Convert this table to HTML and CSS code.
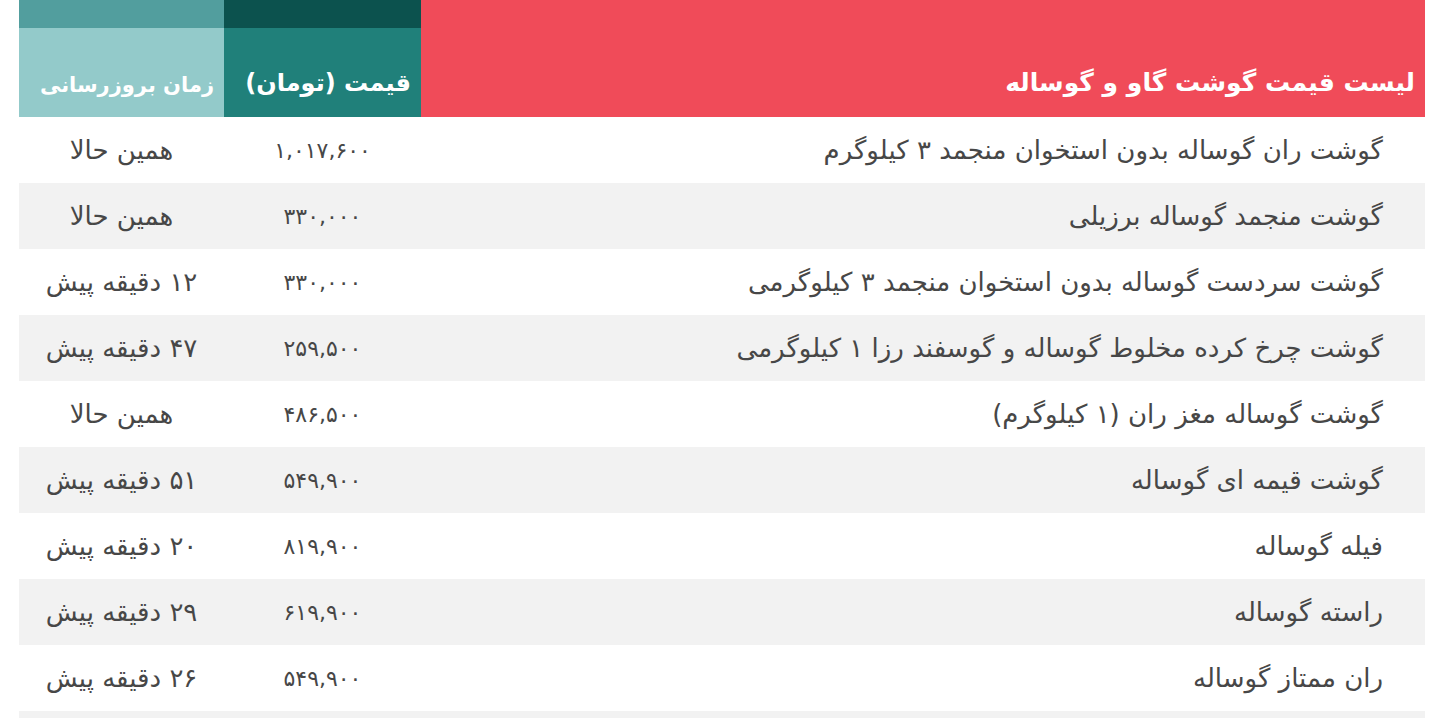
FILE: index.html
```html
<!DOCTYPE html>
<html lang="fa" dir="rtl">
<head>
<meta charset="utf-8">
<title>لیست قیمت گوشت گاو و گوساله</title>
<link rel="stylesheet" href="styles.css">
</head>
<body>
<table class="price-table">
  <thead>
    <tr>
      <th class="h-title">لیست قیمت گوشت گاو و گوساله</th>
      <th class="h-price">قیمت (تومان)</th>
      <th class="h-time">زمان بروزرسانی</th>
    </tr>
  </thead>
  <tbody>
    <tr><td class="c-name">گوشت ران گوساله بدون استخوان منجمد ۳ کیلوگرم</td><td class="c-price">۱,۰۱۷,۶۰۰</td><td class="c-time">همین حالا</td></tr>
    <tr><td class="c-name">گوشت منجمد گوساله برزیلی</td><td class="c-price">۳۳۰,۰۰۰</td><td class="c-time">همین حالا</td></tr>
    <tr><td class="c-name">گوشت سردست گوساله بدون استخوان منجمد ۳ کیلوگرمی</td><td class="c-price">۳۳۰,۰۰۰</td><td class="c-time">۱۲ دقیقه پیش</td></tr>
    <tr><td class="c-name">گوشت چرخ کرده مخلوط گوساله و گوسفند رزا ۱ کیلوگرمی</td><td class="c-price">۲۵۹,۵۰۰</td><td class="c-time">۴۷ دقیقه پیش</td></tr>
    <tr><td class="c-name">گوشت گوساله مغز ران (۱ کیلوگرم)</td><td class="c-price">۴۸۶,۵۰۰</td><td class="c-time">همین حالا</td></tr>
    <tr><td class="c-name">گوشت قیمه ای گوساله</td><td class="c-price">۵۴۹,۹۰۰</td><td class="c-time">۵۱ دقیقه پیش</td></tr>
    <tr><td class="c-name">فیله گوساله</td><td class="c-price">۸۱۹,۹۰۰</td><td class="c-time">۲۰ دقیقه پیش</td></tr>
    <tr><td class="c-name">راسته گوساله</td><td class="c-price">۶۱۹,۹۰۰</td><td class="c-time">۲۹ دقیقه پیش</td></tr>
    <tr><td class="c-name">ران ممتاز گوساله</td><td class="c-price">۵۴۹,۹۰۰</td><td class="c-time">۲۶ دقیقه پیش</td></tr>
    <tr class="row-empty"><td class="c-name"></td><td class="c-price"></td><td class="c-time"></td></tr>
  </tbody>
</table>
</body>
</html>
```
FILE: styles.css
```css
html, body {
  margin: 0;
  padding: 0;
  background: #ffffff;
}
body {
  padding: 0 16px 0 19px;
  font-family: "DejaVu Sans", "Noto Sans", sans-serif;
  color: #474747;
}
.price-table {
  width: 1406px;
  border-collapse: separate;
  border-spacing: 0;
  table-layout: fixed;
}
.price-table th {
  height: 97px;
  padding: 0 10px 20px 10px;
  vertical-align: bottom;
  text-align: right;
  color: #ffffff;
  font-weight: bold;
  white-space: nowrap;
  overflow: hidden;
}
.h-title {
  width: 984px;
  font-size: 25px;
  background: #f04b59;
}
.h-price {
  width: 177px;
  font-size: 24px;
  background: linear-gradient(to bottom, #0c524e 0, #0c524e 28px, #20807a 28px);
}
.h-time {
  width: 185px;
  font-size: 21px;
  background: linear-gradient(to bottom, #529e9e 0, #529e9e 28px, #93caca 28px);
}
.price-table td {
  height: 66px;
  padding: 0;
  font-size: 26px;
  vertical-align: middle;
  white-space: nowrap;
}
.price-table tbody tr:nth-child(even) td {
  background: #f2f2f2;
}
.price-table td.c-name {
  text-align: right;
  padding-right: 42px;
}
.price-table td.c-price {
  text-align: center;
  font-size: 22px;
}
.price-table td.c-time {
  text-align: center;
}
```
